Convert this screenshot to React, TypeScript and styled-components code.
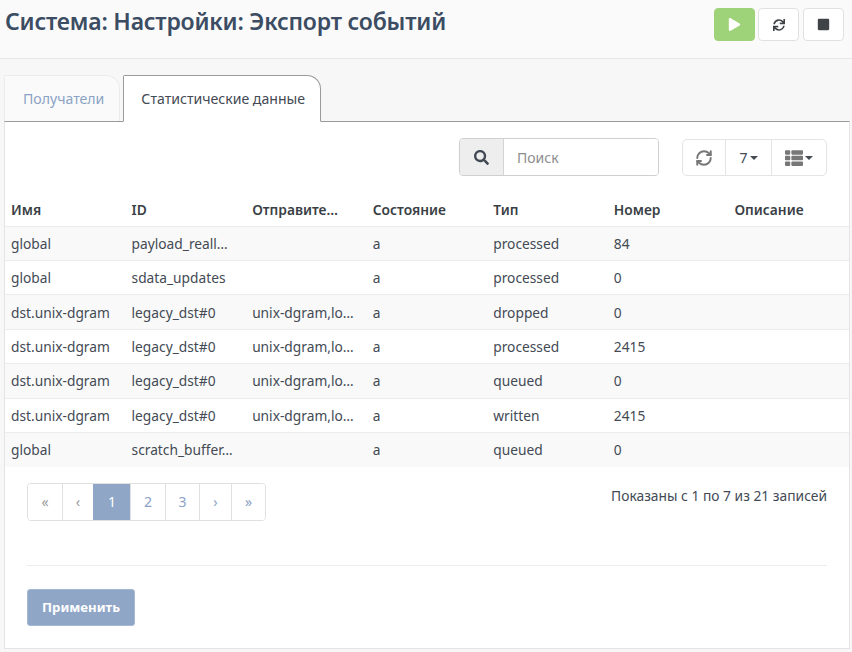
import React from "react";
import styled, { createGlobalStyle } from "styled-components";
import { FaPlay, FaStop, FaSync, FaSearch, FaThList } from "react-icons/fa";
import { RefreshCw } from "lucide-react";

const GlobalStyle = createGlobalStyle`
  html, body {
    margin: 0;
    padding: 0;
    background: #f7f7f7;
    font-family: "Noto Sans", "Liberation Sans", sans-serif;
    font-size: 14px;
    color: #434a54;
  }
`;

const Page = styled.div`
  width: 852px;
  height: 652px;
  overflow: hidden;
`;

const Header = styled.header`
  height: 58px;
  border-bottom: 1px solid #e7e7e7;
  background: #fafafa;
  display: flex;
  justify-content: space-between;
  padding-right: 8px;
`;

const Title = styled.h1`
  margin: 7px 0 0 5px;
  font-size: 23px;
  line-height: 28px;
  font-weight: 600;
  color: #3b4c63;
  letter-spacing: -0.2px;
`;

const Actions = styled.div`
  display: flex;
  gap: 3px;
  margin-top: 8px;
`;

const ActionButton = styled.button<{ $primary?: boolean }>`
  width: 41px;
  height: 33px;
  padding: 0;
  display: flex;
  align-items: center;
  justify-content: center;
  border-radius: 4px;
  border: 1px solid ${({ $primary }) => ($primary ? "#9fd37a" : "#e1e1e1")};
  background: ${({ $primary }) => ($primary ? "#9fd37a" : "#fff")};
  color: ${({ $primary }) => ($primary ? "#fff" : "#3f4348")};
  &:last-child {
    margin-left: 1px;
  }
`;

const Tabs = styled.nav`
  display: flex;
  gap: 3px;
  margin: 16px 0 0 4px;
  height: 46px;
`;

const Tab = styled.div<{ $active?: boolean }>`
  box-sizing: border-box;
  height: ${({ $active }) => ($active ? "47px" : "46px")};
  padding: ${({ $active }) => ($active ? "0 14.5px 0 17px" : "0 15px 0 18px")};
  display: flex;
  align-items: center;
  border-radius: 2px 14px 0 0;
  font-size: 14.1px;
  position: relative;
  z-index: ${({ $active }) => ($active ? 1 : 0)};
  background: ${({ $active }) => ($active ? "#fff" : "#fafafa")};
  color: ${({ $active }) => ($active ? "#434a54" : "#8aa2c4")};
  border: 1px solid ${({ $active }) => ($active ? "#9a9a9a" : "#ececec")};
  border-bottom: ${({ $active }) => ($active ? "1px solid #fff" : "none")};
`;

const Panel = styled.main`
  box-sizing: border-box;
  margin: 0 2px 0 4px;
  height: 528px;
  background: #fff;
  border: 1px solid #e4e4e4;
  border-top: 1px solid #9a9a9a;
`;

const Toolbar = styled.div`
  display: flex;
  justify-content: flex-end;
  gap: 23px;
  padding: 16px 22px 0 0;
  height: 71px;
  box-sizing: border-box;
`;

const SearchBox = styled.div`
  box-sizing: border-box;
  display: flex;
  width: 200px;
  height: 38px;
  border: 1px solid #cfcfcf;
  border-radius: 4px;
  overflow: hidden;
`;

const SearchAddon = styled.span`
  width: 43px;
  display: flex;
  align-items: center;
  justify-content: center;
  background: #eeeeee;
  border-right: 1px solid #d4d4d4;
  color: #434a54;
`;

const SearchInput = styled.input`
  flex: 1;
  min-width: 0;
  border: none;
  outline: none;
  padding: 0 13px;
  font: inherit;
  color: #434a54;
  &::placeholder {
    color: #8d8d8d;
    opacity: 1;
  }
`;

const ButtonGroup = styled.div`
  box-sizing: border-box;
  display: flex;
  height: 37px;
  margin-top: 1px;
  border: 1px solid #e4e4e4;
  border-radius: 5px;
`;

const GroupButton = styled.div<{ $width: number }>`
  box-sizing: border-box;
  width: ${({ $width }) => $width}px;
  display: flex;
  align-items: center;
  justify-content: center;
  gap: 2px;
  color: #777;
  border-left: 1px solid #e4e4e4;
  &:first-child {
    border-left: none;
  }
`;

const GroupText = styled.span`
  color: #434a54;
`;

const Caret = styled.span`
  width: 0;
  height: 0;
  border-top: 4px solid #434a54;
  border-left: 4px solid transparent;
  border-right: 4px solid transparent;
`;

const Table = styled.table`
  width: 100%;
  table-layout: fixed;
  border-collapse: collapse;
`;

const HeadCell = styled.th`
  height: 33px;
  padding: 0 6px;
  box-sizing: border-box;
  text-align: left;
  font-weight: 600;
  font-size: 13.8px;
  color: #3a3f45;
  white-space: nowrap;
  border-bottom: 1px solid #ececec;
`;

const Row = styled.tr<{ $odd: boolean }>`
  background: ${({ $odd }) => ($odd ? "#f9f9f9" : "#fff")};
`;

const Cell = styled.td`
  height: 33.45px;
  padding: 0 6px;
  font-size: 13.75px;
  white-space: nowrap;
  border-top: 1px solid #ececec;
`;

const Footer = styled.div`
  display: flex;
  justify-content: space-between;
  padding: 16px 22px 0;
`;

const Pagination = styled.ul`
  display: flex;
  margin: 0;
  padding: 0;
  list-style: none;
  height: 38px;
  box-sizing: border-box;
  border: 1px solid #e0e0e0;
  border-radius: 4px;
  overflow: hidden;
`;

const PageItem = styled.li<{ $width: number; $active?: boolean; $muted?: boolean }>`
  box-sizing: border-box;
  width: ${({ $width }) => $width}px;
  display: flex;
  align-items: center;
  justify-content: center;
  border-left: 1px solid ${({ $active }) => ($active ? "#8fa6c7" : "#e0e0e0")};
  &:first-child {
    border-left: none;
  }
  background: ${({ $active }) => ($active ? "#8fa6c7" : "#fff")};
  color: ${({ $active, $muted }) => ($active ? "#fff" : $muted ? "#9a9a9a" : "#8aa2c4")};
`;

const Summary = styled.div`
  margin-top: 3px;
  font-size: 13.8px;
`;

const Divider = styled.hr`
  margin: 44px 22px 0;
  border: none;
  border-top: 1px solid #ececec;
`;

const ApplyButton = styled.button`
  display: block;
  margin: 23px 0 0 22px;
  width: 108px;
  height: 37px;
  padding: 0;
  border: 1px solid #a5b8d3;
  border-radius: 3px;
  background: #8fa6c7;
  color: #fff;
  font: inherit;
  font-size: 13.2px;
  font-weight: 700;
`;

const columns = ["Имя", "ID", "Отправите…", "Состояние", "Тип", "Номер", "Описание"];

const rows = [
  ["global", "payload_reall…", "", "a", "processed", "84", ""],
  ["global", "sdata_updates", "", "a", "processed", "0", ""],
  ["dst.unix-dgram", "legacy_dst#0", "unix-dgram,lo…", "a", "dropped", "0", ""],
  ["dst.unix-dgram", "legacy_dst#0", "unix-dgram,lo…", "a", "processed", "2415", ""],
  ["dst.unix-dgram", "legacy_dst#0", "unix-dgram,lo…", "a", "queued", "0", ""],
  ["dst.unix-dgram", "legacy_dst#0", "unix-dgram,lo…", "a", "written", "2415", ""],
  ["global", "scratch_buffer…", "", "a", "queued", "0", ""],
];

const pages = [
  { label: "«", width: 34, muted: true },
  { label: "‹", width: 31, muted: true },
  { label: "1", width: 37, active: true },
  { label: "2", width: 35 },
  { label: "3", width: 34 },
  { label: "›", width: 32 },
  { label: "»", width: 34 },
];

export default function App() {
  return (
    <Page>
      <GlobalStyle />
      <Header>
        <Title>Система: Настройки: Экспорт событий</Title>
        <Actions>
          <ActionButton $primary>
            <FaPlay size={13} />
          </ActionButton>
          <ActionButton>
            <FaSync size={12} />
          </ActionButton>
          <ActionButton>
            <FaStop size={13} />
          </ActionButton>
        </Actions>
      </Header>
      <Tabs>
        <Tab>Получатели</Tab>
        <Tab $active>Статистические данные</Tab>
      </Tabs>
      <Panel>
        <Toolbar>
          <SearchBox>
            <SearchAddon>
              <FaSearch size={15} />
            </SearchAddon>
            <SearchInput placeholder="Поиск" />
          </SearchBox>
          <ButtonGroup>
            <GroupButton $width={42}>
              <RefreshCw size={18} strokeWidth={2.6} />
            </GroupButton>
            <GroupButton $width={46}>
              <GroupText>7</GroupText>
              <Caret />
            </GroupButton>
            <GroupButton $width={55}>
              <FaThList size={18} />
              <Caret />
            </GroupButton>
          </ButtonGroup>
        </Toolbar>
        <Table>
          <thead>
            <tr>
              {columns.map((c) => (
                <HeadCell key={c}>{c}</HeadCell>
              ))}
            </tr>
          </thead>
          <tbody>
            {rows.map((r, i) => (
              <Row key={i} $odd={i % 2 === 0}>
                {r.map((v, j) => (
                  <Cell key={j}>{v}</Cell>
                ))}
              </Row>
            ))}
          </tbody>
        </Table>
        <Footer>
          <Pagination>
            {pages.map((p) => (
              <PageItem key={p.label} $width={p.width} $active={p.active} $muted={p.muted}>
                {p.label}
              </PageItem>
            ))}
          </Pagination>
          <Summary>Показаны с 1 по 7 из 21 записей</Summary>
        </Footer>
        <Divider />
        <ApplyButton>Применить</ApplyButton>
      </Panel>
    </Page>
  );
}
